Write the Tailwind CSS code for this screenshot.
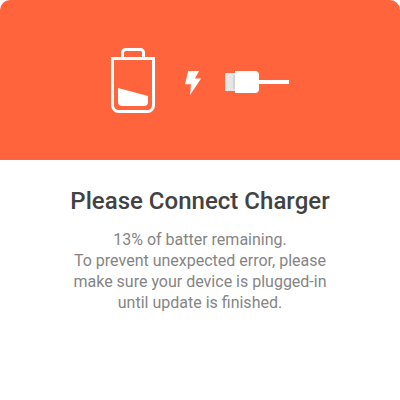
<!DOCTYPE html>
<html lang="en">
<head>
<meta charset="utf-8">
<title>Please Connect Charger</title>
<script src="https://cdn.jsdelivr.net/npm/@tailwindcss/browser@4"></script>
</head>
<body class="bg-white font-['Roboto',sans-serif] antialiased">
<main class="flex h-[400px] w-[400px] flex-col overflow-hidden rounded-[10px] bg-white">
  <div class="flex h-40 shrink-0 items-start bg-[#ff643d] pt-12 pl-[111px]">
    <svg class="h-[65px] w-11 shrink-0" viewBox="0 0 44 65" fill="none" aria-hidden="true">
      <path d="M11.5 10V4.5a3 3 0 0 1 3-3h15a3 3 0 0 1 3 3V10" stroke="#fff" stroke-width="3"/>
      <path d="M1.5 10.5h41v47a6 6 0 0 1-6 6h-29a6 6 0 0 1-6-6z" stroke="#fff" stroke-width="3"/>
      <path d="M7 40l30 8v6a4 4 0 0 1-4 4H11a4 4 0 0 1-4-4z" fill="#fff"/>
    </svg>
    <svg class="mt-[23px] ml-[30px] h-6 w-4 shrink-0" viewBox="0 0 16 24" aria-hidden="true">
      <path d="M3.2 0H14.1L10 7.6H16L5.1 24L6 13.2H0z" fill="#fff"/>
    </svg>
    <svg class="mt-[23px] ml-6 h-[22px] w-16 shrink-0" viewBox="0 0 64 22" aria-hidden="true">
      <path d="M0 2h10v18H0z" fill="#e6e6e6"/>
      <path d="M10 4H9a1 1 0 0 0-1 1v12a1 1 0 0 0 1 1h1z" fill="#d2d2d2"/>
      <path d="M10 0h20a4 4 0 0 1 4 4v14a4 4 0 0 1-4 4H10z" fill="#fff"/>
      <path d="M34 9h30v4H34z" fill="#fff"/>
    </svg>
  </div>
  <div class="flex flex-col items-center pt-[25px] text-center">
    <h1 class="text-2xl leading-8 font-medium tracking-[0.02px] whitespace-nowrap text-[#424242]">Please Connect Charger</h1>
    <p class="mt-3 text-base leading-[21px] whitespace-nowrap text-[#858585]">13% of batter remaining.<br>To prevent unexpected error, please<br>make sure your device is plugged-in<br>until update is finished.</p>
  </div>
</main>
</body>
</html>
